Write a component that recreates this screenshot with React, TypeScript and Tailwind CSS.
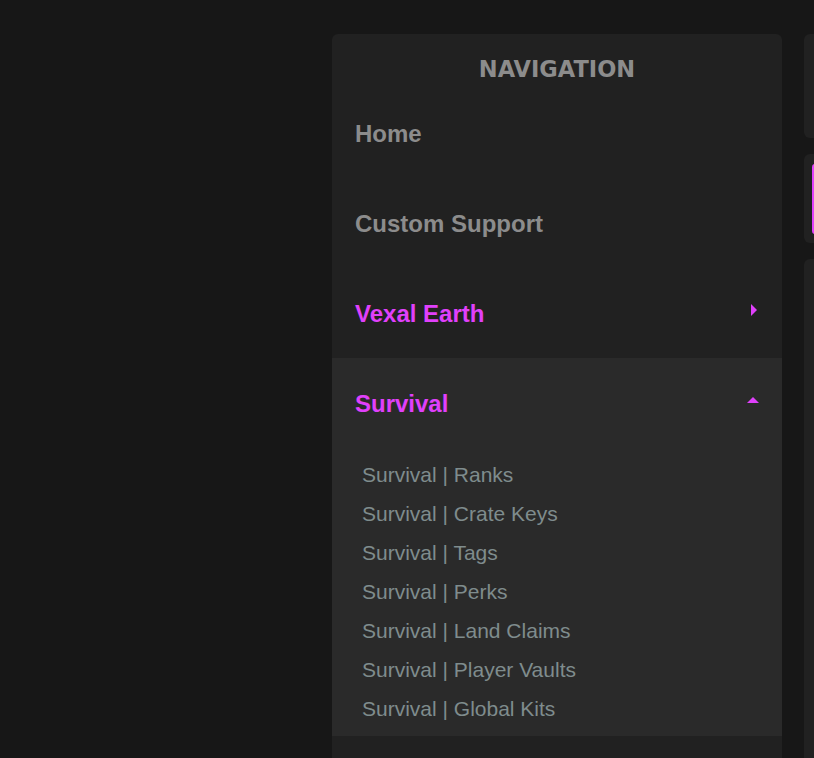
import React from 'react';

const subLinks = [
  'Survival | Ranks',
  'Survival | Crate Keys',
  'Survival | Tags',
  'Survival | Perks',
  'Survival | Land Claims',
  'Survival | Player Vaults',
  'Survival | Global Kits',
];

function NavRow({ label, accent, icon }: { label: string; accent?: boolean; icon?: React.ReactNode }) {
  return (
    <div className="flex h-[90px] items-center justify-between pl-[23px] pr-[23px] pt-[2px]">
      <span
        className={
          'text-[24px] font-bold ' + (accent ? 'text-[#e040fb]' : 'text-[#8c8c8c]')
        }
      >
        {label}
      </span>
      {icon}
    </div>
  );
}

export default function App() {
  return (
    <div
      className="flex min-h-[758px] gap-[22px] overflow-hidden bg-[#171717] pl-[332px] pt-[34px]"
      style={{ fontFamily: '"Liberation Sans", Arial, sans-serif' }}
    >
      {/* Navigation panel */}
      <div className="w-[450px] shrink-0 rounded-t-[6px] bg-[#212121]">
        <div className="flex h-[54px] items-end justify-center pb-[8px]">
          <h2
            className="text-[22.5px] font-bold leading-none text-[#8c8c8c]"
            style={{ fontFamily: '"DejaVu Sans", Verdana, sans-serif' }}
          >
            NAVIGATION
          </h2>
        </div>
        <NavRow label="Home" />
        <NavRow label="Custom Support" />
        <NavRow
          label="Vexal Earth"
          accent
          icon={
            <svg width="6" height="12" viewBox="0 0 6 12" className="mr-[2px] -mt-[8px]">
              <path d="M0 0 L6 6 L0 12 Z" fill="#e040fb" />
            </svg>
          }
        />
        <div className="bg-[#2a2a2a] pb-[8px]">
          <NavRow
            label="Survival"
            accent
            icon={
              <svg width="12" height="6" viewBox="0 0 12 6" className="mr-[0px] -mt-[8px]">
                <path d="M0 6 L6 0 L12 6 Z" fill="#e040fb" />
              </svg>
            }
          />
          <ul className="pt-[7px] pl-[30px]">
            {subLinks.map((s) => (
              <li key={s} className="flex h-[39px] items-center text-[21px] text-[#7f8c8d]">
                {s}
              </li>
            ))}
          </ul>
        </div>
      </div>

      {/* Right column (cut off) */}
      <div className="flex w-[200px] shrink-0 flex-col gap-[16px]">
        <div className="h-[104px] rounded-[6px] bg-[#212121]" />
        <div className="flex h-[89px] items-center rounded-[6px] bg-[#212121] pl-[8px]">
          <div className="h-[70px] w-[6px] rounded-[3px] bg-[#e040fb]" />
        </div>
        <div className="h-[520px] rounded-[6px] bg-[#212121]" />
      </div>
    </div>
  );
}
